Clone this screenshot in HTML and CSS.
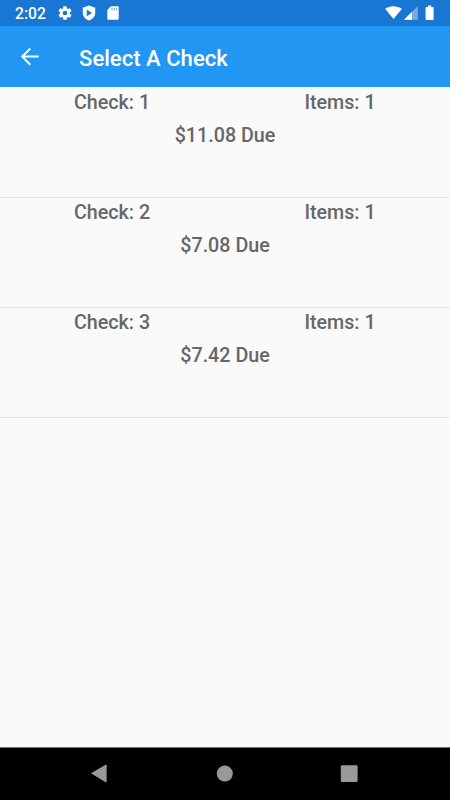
FILE: index.html
```html
<!DOCTYPE html>
<html lang="en">
<head>
<meta charset="utf-8">
<title>Select A Check</title>
<link rel="stylesheet" href="styles.css">
</head>
<body>
<div class="status">
  <span class="clock">2:02</span>
  <svg class="gear" width="16" height="16" viewBox="0 0 24 24"><path fill="currentColor" d="M19.43 12.98c.04-.32.07-.64.07-.98s-.03-.66-.07-.98l2.11-1.65c.19-.15.24-.42.12-.64l-2-3.46c-.12-.22-.39-.3-.61-.22l-2.49 1c-.52-.4-1.08-.73-1.69-.98l-.38-2.65A.49.49 0 0 0 14 2h-4c-.25 0-.46.18-.49.42l-.38 2.65c-.61.25-1.17.59-1.69.98l-2.49-1c-.23-.09-.49 0-.61.22l-2 3.46c-.13.22-.07.49.12.64l2.11 1.65c-.04.32-.07.65-.07.98s.03.66.07.98l-2.11 1.65c-.19.15-.24.42-.12.64l2 3.46c.12.22.39.3.61.22l2.49-1c.52.4 1.08.73 1.69.98l.38 2.65c.03.24.24.42.49.42h4c.25 0 .46-.18.49-.42l.38-2.65c.61-.25 1.17-.59 1.69-.98l2.49 1c.23.09.49 0 .61-.22l2-3.46c.12-.22.07-.49-.12-.64zM12 15.5a3.5 3.5 0 1 1 0-7 3.5 3.5 0 0 1 0 7z"/></svg>
  <svg class="shield" width="14" height="16" viewBox="0 0 14 16"><path fill="currentColor" fill-rule="evenodd" d="M7 .5 13.2 2.8v5.1c0 3.3-2.5 6.2-6.2 7.6C3.300 14.100.8 11.200.8 7.900V2.800zM4.800 4.600v6.600l5.200-3.300z"/></svg>
  <svg class="card" width="12" height="14" viewBox="0 0 12 14"><path fill="currentColor" d="M4 .2h6.400c.8 0 1.300.5 1.300 1.300v11c0 .8-.5 1.300-1.300 1.300H1.600c-.8 0-1.300-.5-1.300-1.300V4z"/><path stroke="#1976d2" stroke-opacity=".65" d="M5 1.800v2.700M7.200 1.800v2.700M9.400 1.800v2.700"/></svg>
  <svg class="signals" width="52" height="16" viewBox="0 0 52 16"><path fill="currentColor" d="M.1 3.800C4.900.4 12.100.4 16.900 3.800L8.500 14z"/><path fill="currentColor" opacity=".4" d="M19 14.700 32.800 1v13.700z"/><path fill="currentColor" d="M19 14.700 27 6.800v7.900z"/><path fill="currentColor" d="M43 .6h3.200v1.300h1.500c.5 0 .9.400.9.900V14c0 .5-.4.900-.9.900h-6.200c-.5 0-.9-.4-.9-.9V2.800c0-.5.4-.9.900-.9H43z"/></svg>
</div>
<header class="bar">
  <svg class="back" width="20" height="20" viewBox="0 0 20 20"><path d="M18.700 9.600H2.400M10.300 1.500 2.200 9.600l8.100 8.100" fill="none" stroke="currentColor" stroke-width="2"/></svg>
  <h1>Select A Check</h1>
</header>
<main>
  <section class="row"><div class="cols"><span>Check: 1</span><span>Items: 1</span></div><div class="due">$11.08 Due</div></section>
  <section class="row"><div class="cols"><span>Check: 2</span><span>Items: 1</span></div><div class="due">$7.08 Due</div></section>
  <section class="row"><div class="cols"><span>Check: 3</span><span>Items: 1</span></div><div class="due">$7.42 Due</div></section>
</main>
<nav class="nav">
  <svg width="18" height="20" viewBox="0 0 18 20"><path fill="currentColor" d="M1 9.200 15.600.8q1-.5 1 .5v16.400q0 1-1 .5z"/></svg>
  <svg width="18" height="20" viewBox="0 0 18 20"><circle cx="9.800" cy="9.600" r="8" fill="currentColor"/></svg>
  <svg width="18" height="20" viewBox="0 0 18 20"><rect x=".8" y="1.200" width="16.800" height="16.800" rx="1.300" fill="currentColor"/></svg>
</nav>
</body>
</html>
```
FILE: styles.css
```css
* { box-sizing: border-box; }
body {
  margin: 0;
  height: 800px;
  display: flex;
  flex-direction: column;
  background: #fafafa;
  font-family: Roboto, sans-serif;
  overflow: hidden;
}
svg { display: block; flex: none; }
.status {
  height: 26px;
  display: flex;
  align-items: center;
  padding: 0 15px;
  background: #1976d2;
  color: #fff;
}
.clock {
  width: 42px;
  font-size: 15.7px;
  font-weight: 500;
  line-height: 26px;
  padding-top: 2px;
}
.shield { margin-left: 9px; }
.card { margin-left: 11px; }
.signals { margin-left: auto; margin-right: -2px; }
.bar {
  height: 61px;
  display: flex;
  align-items: center;
  padding-left: 20px;
  background: #2196f3;
  color: #fff;
}
h1 {
  margin: 2px 0 0 39px;
  font-size: 22.1px;
  font-weight: 500;
  line-height: 30px;
}
main {
  flex: 1;
  color: #676767;
  font-size: 19.7px;
  font-weight: 500;
}
.row {
  height: 110px;
  padding-top: 1px;
  border-bottom: 1px solid #e5e5e5;
  text-align: center;
}
.row:first-child { height: 111px; }
.cols {
  display: grid;
  grid-template-columns: 224px 232px;
  line-height: 30px;
}
.row + .row .cols { line-height: 28px; }
.row + .row .due { line-height: 38px; }
.due { line-height: 36px; }
.nav {
  height: 53px;
  display: flex;
  justify-content: space-between;
  align-items: center;
  padding: 0 92px 0 90px;
  background: #000;
  border-top: 1px solid #777;
  color: #999;
}
```
